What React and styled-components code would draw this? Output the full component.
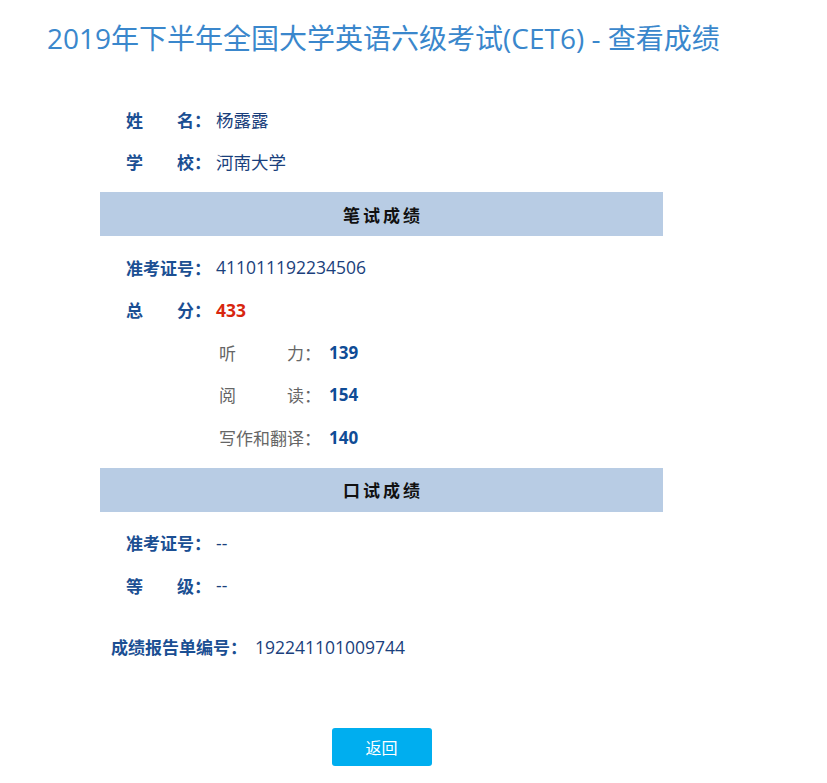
import React from "react";
import styled, { createGlobalStyle } from "styled-components";

const GlobalStyle = createGlobalStyle`
  body {
    margin: 0;
    background: #fff;
    font-family: "Open Sans", "Noto Sans CJK SC", sans-serif;
  }
`;

const Page = styled.div`
  padding: 18px 0 0 47px;
`;

const Title = styled.h1`
  margin: 0;
  font-size: 28px;
  font-weight: normal;
  line-height: 40px;
  color: #3a87cc;
`;

const Board = styled.div`
  width: 563px;
  margin: 40px 0 0 100px;
`;

const Row = styled.div`
  display: flex;
  align-items: center;
  height: 42.5px;
  padding-left: ${(p) => p.indent || 26}px;
  font-size: 17px;
`;

const Label = styled.span`
  width: ${(p) => (p.auto ? "auto" : "90px")};
  margin-right: ${(p) => (p.auto ? "8px" : "0")};
  font-weight: bold;
  color: #1b4f93;
  white-space: pre;
`;

const SubLabel = styled.span`
  width: 110px;
  color: #666;
  white-space: pre;
`;

const Value = styled.span`
  font-size: 17.5px;
  color: ${(p) => (p.red ? "#d8260e" : "#1a3f7c")};
  font-weight: ${(p) => (p.bold ? "bold" : "normal")};
`;

const SubValue = styled.span`
  color: #0f4c96;
  font-weight: bold;
`;

const Bar = styled.div`
  height: 44px;
  margin: 9px 0 10px;
  padding-left: 3px;
  background: #b8cce4;
  display: flex;
  align-items: center;
  justify-content: center;
  font-size: 17px;
  font-weight: bold;
  letter-spacing: 3px;
  color: #111;
`;

const Report = styled(Row)`
  margin-top: 19px;
`;

const Footer = styled.div`
  display: flex;
  justify-content: center;
  margin-top: 60px;
`;

const Button = styled.button`
  width: 100px;
  height: 38px;
  border: none;
  border-radius: 3px;
  background: #00aeef;
  color: #fff;
  font-family: "Noto Sans CJK SC", sans-serif;
  font-size: 16px;
  cursor: pointer;
`;

const written = [
  ["听　　　力：", "139"],
  ["阅　　　读：", "154"],
  ["写作和翻译：", "140"],
];

export default function App() {
  return (
    <>
      <GlobalStyle />
      <Page>
        <Title>2019年下半年全国大学英语六级考试(CET6) - 查看成绩</Title>
      </Page>
      <Board>
        <Row>
          <Label>姓　　名：</Label>
          <Value>杨露露</Value>
        </Row>
        <Row>
          <Label>学　　校：</Label>
          <Value>河南大学</Value>
        </Row>
        <Bar>笔试成绩</Bar>
        <Row>
          <Label>准考证号：</Label>
          <Value>411011192234506</Value>
        </Row>
        <Row>
          <Label>总　　分：</Label>
          <Value red bold>433</Value>
        </Row>
        {written.map(([k, v]) => (
          <Row key={k} indent={119}>
            <SubLabel>{k}</SubLabel>
            <SubValue>{v}</SubValue>
          </Row>
        ))}
        <Bar>口试成绩</Bar>
        <Row>
          <Label>准考证号：</Label>
          <Value>--</Value>
        </Row>
        <Row>
          <Label>等　　级：</Label>
          <Value>--</Value>
        </Row>
        <Report indent={11}>
          <Label auto>成绩报告单编号：</Label>
          <Value>192241101009744</Value>
        </Report>
        <Footer>
          <Button>返回</Button>
        </Footer>
      </Board>
    </>
  );
}
